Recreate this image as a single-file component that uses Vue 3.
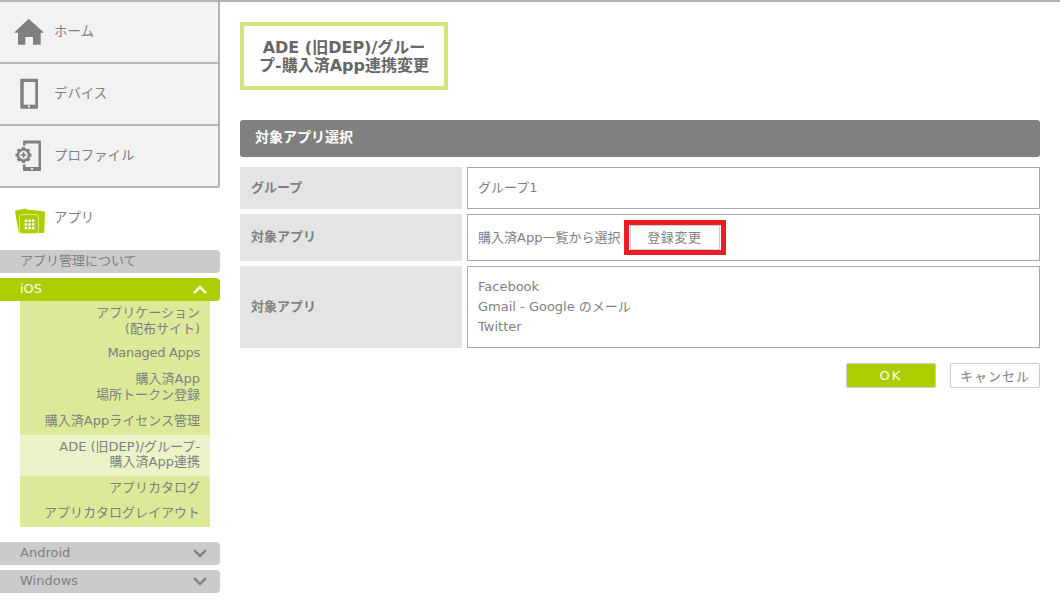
<script setup>
const sub = [
  { lines: ['アプリケーション', '(配布サイト)'], h: 39 },
  { lines: ['Managed Apps'], h: 26, tight: true },
  { lines: ['購入済App', '場所トークン登録'], h: 41 },
  { lines: ['購入済Appライセンス管理'], h: 28 },
  { lines: ['ADE (旧DEP)/グループ-', '購入済App連携'], h: 41, active: true },
  { lines: ['アプリカタログ'], h: 25, raised: true },
  { lines: ['アプリカタログレイアウト'], h: 26, raised: true }
]
const apps = ['Facebook', 'Gmail - Google のメール', 'Twitter']
const dots = []
for (const y of [19.5, 23.2, 26.8]) {
  for (const x of [11.7, 15.3, 18.9]) dots.push({ x, y })
}
</script>

<template>
  <div class="page">
    <aside class="side">
      <div class="top-menu">
        <div class="top-item">
          <svg class="ico" viewBox="0 0 32 28" width="32" height="28"><path fill="#808080" d="M15.700 1.700 31 15.700H27.700V27.700H20V20H12.300V27.700H5V15.700H1z"/></svg>
          <span>ホーム</span>
        </div>
        <div class="top-item">
          <svg class="ico" viewBox="0 0 32 32" width="32" height="32">
            <path fill="#808080" fill-rule="evenodd" d="M8.300 1.700h15.700a1 1 0 0 1 1 1v28a1 1 0 0 1-1 1H8.300a1 1 0 0 1-1-1v-28a1 1 0 0 1 1-1zM10.700 5v22.700h11.600V5z"/>
            <rect x="15" y="28.500" width="2" height="2" fill="#f2f2f2"/>
          </svg>
          <span>デバイス</span>
        </div>
        <div class="top-item last">
          <svg class="ico" viewBox="0 0 32 32" width="32" height="32">
            <path fill="#808080" fill-rule="evenodd" d="M11 1.500h16a1 1 0 0 1 1 1v28.500a1 1 0 0 1-1 1H11a1 1 0 0 1-1-1v-28.500a1 1 0 0 1 1-1zM12.500 4.500V28h13V4.500z"/>
            <rect x="18" y="29" width="2" height="2" fill="#f2f2f2"/>
            <circle cx="10.500" cy="16" r="9.500" fill="#f2f2f2"/>
            <path stroke="#808080" stroke-width="3.200" d="M10.500 8v16M2.500 16h16M4.800 10.300l11.400 11.400M16.200 10.300 4.800 21.700"/>
            <circle cx="10.500" cy="16" r="6.800" fill="#808080"/>
            <circle cx="10.500" cy="16" r="4.300" fill="#f2f2f2"/>
            <path stroke="#808080" stroke-width="1.700" d="M10.500 13.200v5.600M7.700 16h5.600"/>
          </svg>
          <span>プロファイル</span>
        </div>
      </div>
      <div class="app-head">
        <svg class="ico" viewBox="0 0 34 34" width="34" height="34">
          <path fill="#acce00" d="M3 10.500 12.500 8.500Q13.500 8.300 14 9.500L18 30 8 33Q6 33 5.500 31L2 12Q2 10.700 3 10.500z"/>
          <path fill="#acce00" d="M13.500 9.500 30.800 11.200Q32 11.400 32 12.600L31.300 31.500Q31.200 33 30 33H14z"/>
          <rect x="6.500" y="14.500" width="19" height="19" rx="3" fill="#acce00" stroke="#e6f0a8" stroke-width="0.800"/>
          <rect v-for="d in dots" :key="d.x + '-' + d.y" :x="d.x" :y="d.y" width="2.500" height="2.500" fill="#fff"/>
        </svg>
        <span>アプリ</span>
      </div>
      <div class="bar cjk">アプリ管理について</div>
      <div class="bar on">
        <span>iOS</span>
        <svg viewBox="0 0 14 9" width="14" height="9"><path fill="none" stroke="#fff" stroke-width="2.400" d="M1 8l6-6 6 6"/></svg>
      </div>
      <div class="subs">
        <div v-for="s in sub" :key="s.lines[0]" class="sub" :class="{ active: s.active, tight: s.tight, raised: s.raised }" :style="{ height: s.h + 'px' }">
          <div v-for="l in s.lines" :key="l">{{ l }}</div>
        </div>
      </div>
      <div class="bar android">
        <span>Android</span>
        <svg viewBox="0 0 14 9" width="14" height="9"><path fill="none" stroke="#808080" stroke-width="2.400" d="M1 1l6 6 6-6"/></svg>
      </div>
      <div class="bar">
        <span>Windows</span>
        <svg viewBox="0 0 14 9" width="14" height="9"><path fill="none" stroke="#808080" stroke-width="2.400" d="M1 1l6 6 6-6"/></svg>
      </div>
    </aside>

    <main class="main">
      <h1 class="title">ADE (旧DEP)/グルー<br>プ-購入済App連携変更</h1>
      <div class="section">対象アプリ選択</div>
      <div class="row r1">
        <div class="label">グループ</div>
        <div class="value up">グループ1</div>
      </div>
      <div class="row r2">
        <div class="label">対象アプリ</div>
        <div class="value inline">
          <span class="nudge">購入済App一覧から選択</span>
          <span class="red"><button class="change">登録変更</button></span>
        </div>
      </div>
      <div class="row r3">
        <div class="label">対象アプリ</div>
        <div class="value list">
          <div v-for="a in apps" :key="a">{{ a }}</div>
        </div>
      </div>
      <div class="actions">
        <button class="ok">OK</button>
        <button class="cancel">キャンセル</button>
      </div>
    </main>
  </div>
</template>

<style>
html, body { margin: 0; background: #fff; }
</style>

<style scoped>
.page {
  display: flex;
  width: 1060px;
  height: 608px;
  box-sizing: border-box;
  border-top: 2px solid #b3b3b3;
  overflow: hidden;
  font-family: "DejaVu Sans", "Noto Sans CJK JP", sans-serif;
  font-size: 13px;
  color: #808080;
}
.side { width: 220px; flex: none; }
.top-menu {
  background: #f2f2f2;
  border-right: 2px solid #b3b3b3;
  border-bottom: 2px solid #b3b3b3;
  border-bottom-right-radius: 3px;
}
.top-item {
  box-sizing: border-box;
  padding-bottom: 5px;
  display: flex;
  align-items: center;
  border-bottom: 2px solid #b3b3b3;
  height: 62px;
  font-size: 13.4px;
}
.top-item.last { border-bottom: 0; height: 60px; }
.ico { margin-left: 13px; margin-right: 9px; flex: none; }
.top-item .ico { margin-top: 3px; }
.app-head { height: 62px; box-sizing: border-box; padding-bottom: 7px; display: flex; align-items: center; font-size: 13.4px; }
.app-head .ico { margin-top: 2px; margin-right: 7px; }
.bar {
  height: 23px;
  width: 220px;
  box-sizing: border-box;
  padding: 0 13px 3px 20px;
  margin-bottom: 5px;
  background: #cbcbcb;
  border-radius: 0 4px 4px 0;
  display: flex;
  align-items: center;
  justify-content: space-between;
}
.bar.cjk { padding-bottom: 5px; }
.bar svg { margin-top: 3px; }
.bar.on { background: #acce00; color: #fff; margin-bottom: 0; }
.bar.android { margin-top: 15px; }
.subs { width: 190px; margin-left: 20px; background: #dce998; }
.sub {
  display: flex;
  flex-direction: column;
  justify-content: center;
  text-align: right;
  padding-right: 10px;
  line-height: 16px;
  box-sizing: border-box;
}
.sub.tight { letter-spacing: -0.3px; }
.sub.raised { padding-bottom: 2px; }
.sub.active { background: #ebf3c9; line-height: 15px; padding-bottom: 3px; }
.main { width: 800px; margin-left: 20px; padding-top: 20px; }
.title {
  width: 208px;
  height: 68px;
  box-sizing: border-box;
  margin: 0 0 30px;
  border: 4px solid #d6e67a;
  display: block;
  text-align: center;
  padding-top: 13px;
  font-size: 16px;
  line-height: 18px;
  font-weight: 700;
  color: #666;
  white-space: nowrap;
}
.section {
  height: 37px;
  background: #808080;
  border-radius: 3px;
  color: #fff;
  font-size: 14px;
  font-weight: 700;
  line-height: 34px;
  padding-left: 15px;
  margin-bottom: 10px;
}
.row { display: flex; gap: 5px; margin-bottom: 5px; }
.r1 { height: 42px; }
.r2 { height: 47px; }
.r3 { height: 82px; }
.label {
  width: 222px;
  flex: none;
  background: #e4e4e4;
  font-weight: 700;
  display: flex;
  align-items: center;
  padding: 0 0 4px 11px;
  box-sizing: border-box;
}
.value {
  flex: 1;
  border: 1px solid #aaa;
  box-sizing: border-box;
  display: flex;
  align-items: center;
  padding-left: 10px;
}
.value.up { padding-bottom: 4px; }
.value.inline { gap: 4px; }
.nudge { padding-bottom: 2px; }
.value.list { flex-direction: column; align-items: flex-start; justify-content: center; line-height: 20px; }
.red { display: flex; border: 5px solid #ed1c24; padding: 0 1px; }
.change {
  width: 90px;
  height: 25px;
  padding: 0 2px 2px 0;
  background: #fff;
  border: 1px solid #ccc;
  font: inherit;
  color: #808080;
  letter-spacing: 0.6px;
}
.actions { display: flex; justify-content: flex-end; gap: 14px; margin-top: 15px; }
.ok, .cancel {
  width: 90px;
  height: 25px;
  padding: 0;
  box-sizing: border-box;
  border-radius: 2px;
  font: inherit;
}
.ok { background: #acce00; border: 1px solid #ccc; color: #fff; letter-spacing: 2px; }
.cancel { background: #fff; border: 1px solid #ccc; color: #808080; letter-spacing: 1px; }
</style>
